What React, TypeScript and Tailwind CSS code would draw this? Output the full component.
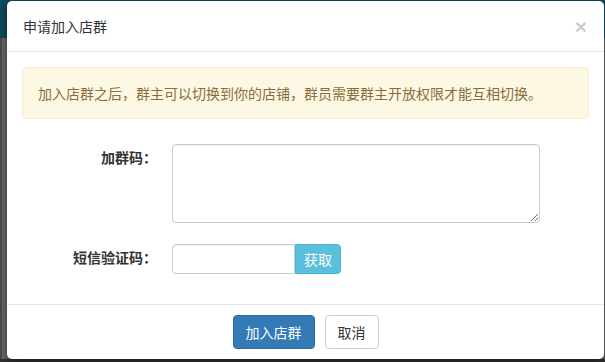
export default function App() {
  const font = { fontFamily: '"Noto Sans CJK SC", "Liberation Sans", sans-serif' };

  return (
    <div className="relative w-[605px] h-[362px] overflow-hidden bg-[#333]" style={font}>
      {/* page behind the dimmed backdrop */}
      <div className="flex flex-col">
        <div className="h-[38px] bg-[#0e4a5c]" />
        <div className="h-[321px] bg-[#686868] border-l-[2px] border-[#4a4a4a]" />
      </div>

      {/* modal */}
      <div className="absolute left-[7px] top-[1px] w-[597px] h-[358px] bg-white rounded-[5px] shadow-[0_3px_9px_rgba(0,0,0,0.5)] flex flex-col text-[14px] text-[#333]">
        <div className="h-[51px] border-b border-[#e5e5e5] flex items-center justify-between pl-[16px] pr-[17px]">
          <h4 className="leading-[20px] text-[14px]">申请加入店群</h4>
          <button
            className="text-[21px] font-bold leading-none text-black opacity-20"
            style={{ fontFamily: '"Liberation Sans", sans-serif' }}
          >
            ×
          </button>
        </div>

        <div className="flex-1 px-[15px] pt-[15px]">
          <div className="h-[52px] border border-[#faebcc] bg-[#fcf8e3] rounded-[4px] px-[15px] py-[15px] text-[#8a6d3b] leading-[20px]">
            加入店群之后，群主可以切换到你的店铺，群员需要群主开放权限才能互相切换。
          </div>

          <form className="mt-[25px] flex flex-col gap-[21px]">
            <div className="flex items-start">
              <label className="w-[150px] pr-[15px] pt-[3px] text-right font-bold leading-[20px]">加群码：</label>
              <textarea className="w-[368px] h-[79px] border border-[#ccc] rounded-[4px] shadow-[inset_0_1px_1px_rgba(0,0,0,0.075)] px-[12px] py-[6px] outline-none" />
            </div>
            <div className="flex items-start">
              <label className="w-[150px] pr-[15px] pt-[3px] text-right font-bold leading-[20px]">短信验证码：</label>
              <div className="flex h-[30px]">
                <input className="w-[123px] h-[30px] border border-[#ccc] rounded-l-[4px] shadow-[inset_0_1px_1px_rgba(0,0,0,0.075)] px-[10px] outline-none" />
                <button
                  type="button"
                  className="w-[46px] h-[30px] bg-[#5bc0de] border border-[#46b8da] rounded-r-[4px] text-white text-[14px] leading-[20px]"
                >
                  获取
                </button>
              </div>
            </div>
          </form>
        </div>

        <div className="h-[55px] border-t border-[#e5e5e5] pt-[10px] flex justify-center gap-[10px]">
          <button className="w-[82px] h-[34px] bg-[#337ab7] border border-[#2e6da4] rounded-[4px] text-white leading-[20px]">
            加入店群
          </button>
          <button className="w-[54px] h-[34px] bg-white border border-[#ccc] rounded-[4px] text-[#333] leading-[20px]">
            取消
          </button>
        </div>
      </div>
    </div>
  );
}
